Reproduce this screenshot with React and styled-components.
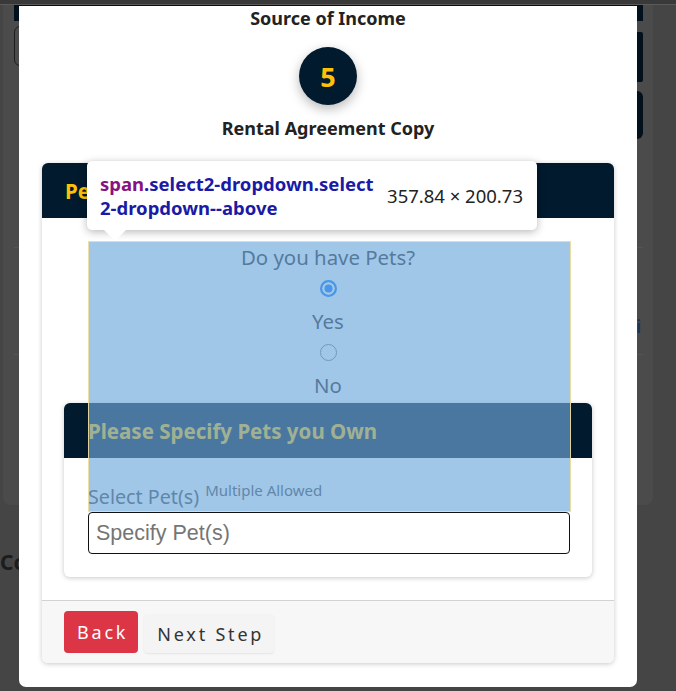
import React from "react";
import styled, { createGlobalStyle } from "styled-components";

const GlobalStyle = createGlobalStyle`
  html, body { margin: 0; padding: 0; }
  body {
    background: #454545;
    font-family: "Noto Sans", "Open Sans", sans-serif;
    overflow: hidden;
  }
  * { box-sizing: border-box; }
`;

/* ---------- dimmed page behind the modal ---------- */
const Page = styled.div`
  position: relative;
  width: 676px;
  height: 691px;
  background: #454545;
  overflow: hidden;
`;

const TopStrip = styled.div`
  height: 5px;
  background: #393939;
  border-bottom: 1px solid #5a5a5a;
`;

const BackPanel = styled.div`
  width: 650px;
  height: 500px;
  margin-left: 3px;
  padding: 0 10px 0 11px;
  background: #4b4b4b;
  border-radius: 0 0 8px 8px;
  display: flex;
  flex-direction: column;
`;

const BgNavBar = styled.div`
  height: 16px;
  background: #03111c;
`;

const BgTopRow = styled.div`
  display: flex;
  justify-content: space-between;
  align-items: flex-start;
`;

const BgField = styled.div`
  margin-top: 5px;
  width: 250px;
  height: 40px;
  border: 1px solid #1e1e1e;
  border-radius: 6px;
`;

const BgNavyStack = styled.div`
  margin-top: 11px;
  display: flex;
  flex-direction: column;
  gap: 9px;
`;

const BgNavyBlock = styled.div`
  width: 90px;
  height: ${(p) => p.$h}px;
  background: #03111c;
  border-radius: ${(p) => (p.$round ? "6px" : "2px")};
`;

const BgSection = styled.div`
  margin-top: 108px;
  height: 108px;
  border-top: 1px solid #545454;
  border-bottom: 1px solid #545454;
  display: flex;
  justify-content: flex-end;
  align-items: flex-end;
  padding: 0 2px 16px 0;
`;

const BgLink = styled.span`
  font-weight: 700;
  font-size: 17px;
  color: #1b3855;
`;

const BgHeading = styled.div`
  margin-top: 43px;
  font-weight: 700;
  font-size: 21px;
  line-height: 28px;
  color: #1c1c1c;
`;

/* ---------- modal ---------- */
const Modal = styled.div`
  position: absolute;
  left: 19px;
  top: 6px;
  width: 618px;
  height: 681px;
  background: #fff;
  border-radius: 0 0 7px 7px;
  padding: 0 23px 23px;
  display: flex;
  flex-direction: column;
  align-items: stretch;
`;

const StepTitle = styled.div`
  text-align: center;
  font-weight: 700;
  font-size: 18px;
  line-height: 24px;
  color: #222;
`;

const StepCircle = styled.div`
  align-self: center;
  margin-top: 17px;
  width: 58px;
  height: 58px;
  border-radius: 50%;
  background: #021a2e;
  color: #ffc107;
  font-weight: 700;
  font-size: 27px;
  display: flex;
  align-items: center;
  justify-content: center;
  box-shadow: 0 4px 12px rgba(0, 0, 0, 0.28);
`;

const StepName = styled(StepTitle)`
  margin-top: 11px;
`;

const Card = styled.div`
  margin-top: 23px;
  border-radius: 6px;
  background: #fff;
  box-shadow: 0 1px 5px rgba(0, 0, 0, 0.22);
  overflow: hidden;
  display: flex;
  flex-direction: column;
`;

const CardHeader = styled.div`
  height: 55px;
  background: #021a2e;
  display: flex;
  align-items: center;
  padding-left: ${(p) => p.$pad || 23}px;
  color: #ffc107;
  font-weight: 700;
  font-size: 20.5px;
`;

const CardBody = styled.div`
  padding: 23px 22px;
  display: flex;
  flex-direction: column;
`;

const Question = styled.div`
  text-align: center;
  font-size: 20.4px;
  line-height: 32px;
  color: #222;
`;

const Option = styled.label`
  display: flex;
  flex-direction: column;
  align-items: center;
`;

const Radio = styled.input.attrs({ type: "radio" })`
  appearance: none;
  margin: 7px 0 0;
  width: 17px;
  height: 17px;
  border-radius: 50%;
  border: 1.5px solid #767676;
  background: #fff;
  &:checked {
    border: 2px solid #0075ff;
    background: #0075ff;
    box-shadow: inset 0 0 0 2.5px #fff;
  }
`;

const OptionText = styled.span`
  margin-top: 8px;
  font-size: 20.4px;
  line-height: 32px;
  color: #222;
`;

const InnerCard = styled(Card)`
  margin-top: 2px;
`;

const InnerBody = styled.div`
  padding: 24px 22px 23px 24px;
  display: flex;
  flex-direction: column;
`;

const FieldLabel = styled.div`
  height: 30px;
  font-size: 19.7px;
  line-height: 30px;
  color: #444;
  white-space: nowrap;
`;

const Hint = styled.span`
  margin-left: 6px;
  font-size: 15px;
  line-height: 1;
  color: #444;
  vertical-align: 8px;
`;

const TextInput = styled.input`
  height: 42px;
  width: 100%;
  border: 1px solid #111;
  border-radius: 4px;
  padding: 0 7px;
  font-family: "Liberation Sans", Arial, sans-serif;
  font-size: 21.5px;
  color: #222;
  &::placeholder { color: #757575; }
`;

const CardFooter = styled.div`
  border-top: 1px solid #d2d2d2;
  background: #f7f7f7;
  padding: 10px 22px;
  display: flex;
  align-items: flex-end;
  gap: 6px;
`;

const Button = styled.button`
  height: ${(p) => (p.$danger ? 42 : 39)}px;
  padding: 0 10px 0 13px;
  border: none;
  border-radius: 4px;
  font-family: "Noto Sans", sans-serif;
  font-size: 18px;
  letter-spacing: 2.8px;
  background: ${(p) => (p.$danger ? "#dc3545" : "#f4f4f4")};
  color: ${(p) => (p.$danger ? "#fff" : "#333")};
  box-shadow: ${(p) => (p.$danger ? "none" : "0 1px 2px rgba(0,0,0,0.08)")};
`;

/* ---------- devtools inspect overlay ---------- */
const Highlight = styled.div`
  position: absolute;
  left: 69px;
  top: 235px;
  width: 483px;
  height: 271px;
  background: rgba(111, 168, 220, 0.66);
  border: 1px solid rgba(250, 226, 150, 0.85);
  pointer-events: none;
`;

const Tooltip = styled.div`
  position: absolute;
  left: 68px;
  top: 155px;
  width: 450px;
  height: 69px;
  padding: 0 14px 0 13px;
  background: #fff;
  border-radius: 5px;
  box-shadow: 0 2px 8px rgba(0, 0, 0, 0.28);
  display: flex;
  align-items: center;
  justify-content: space-between;
  &::after {
    content: "";
    position: absolute;
    left: 17px;
    bottom: -11px;
    border-left: 11px solid transparent;
    border-right: 11px solid transparent;
    border-top: 11px solid #fff;
  }
`;

const TipName = styled.div`
  font-weight: 700;
  font-size: 18.5px;
  line-height: 24px;
  color: #1a1aa6;
`;

const TipTag = styled.span`
  color: #881280;
`;

const TipSize = styled.div`
  font-size: 18.5px;
  color: #222;
`;

export default function App() {
  return (
    <>
      <GlobalStyle />
      <Page>
        <TopStrip />
        <BackPanel>
          <BgNavBar />
          <BgTopRow>
            <BgField />
            <BgNavyStack>
              <BgNavyBlock $h={50} />
              <BgNavyBlock $h={48} $round />
            </BgNavyStack>
          </BgTopRow>
          <BgSection>
            <BgLink>Wi</BgLink>
          </BgSection>
        </BackPanel>
        <BgHeading>Contact Information</BgHeading>

        <Modal>
          <StepTitle>Source of Income</StepTitle>
          <StepCircle>5</StepCircle>
          <StepName>Rental Agreement Copy</StepName>

          <Card>
            <CardHeader>Pets</CardHeader>
            <CardBody>
              <Question>Do you have Pets?</Question>
              <Option>
                <Radio name="pets" defaultChecked />
                <OptionText>Yes</OptionText>
              </Option>
              <Option>
                <Radio name="pets" />
                <OptionText>No</OptionText>
              </Option>

              <InnerCard>
                <CardHeader $pad={24}>Please Specify Pets you Own</CardHeader>
                <InnerBody>
                  <FieldLabel>
                    Select Pet(s)<Hint>Multiple Allowed</Hint>
                  </FieldLabel>
                  <TextInput placeholder="Specify Pet(s)" />
                </InnerBody>
              </InnerCard>
            </CardBody>
            <CardFooter>
              <Button $danger>Back</Button>
              <Button>Next Step</Button>
            </CardFooter>
          </Card>

          <Highlight />
          <Tooltip>
            <TipName>
              <TipTag>span</TipTag>.select2-dropdown.select
              <br />
              2-dropdown--above
            </TipName>
            <TipSize>357.84 × 200.73</TipSize>
          </Tooltip>
        </Modal>
      </Page>
    </>
  );
}
